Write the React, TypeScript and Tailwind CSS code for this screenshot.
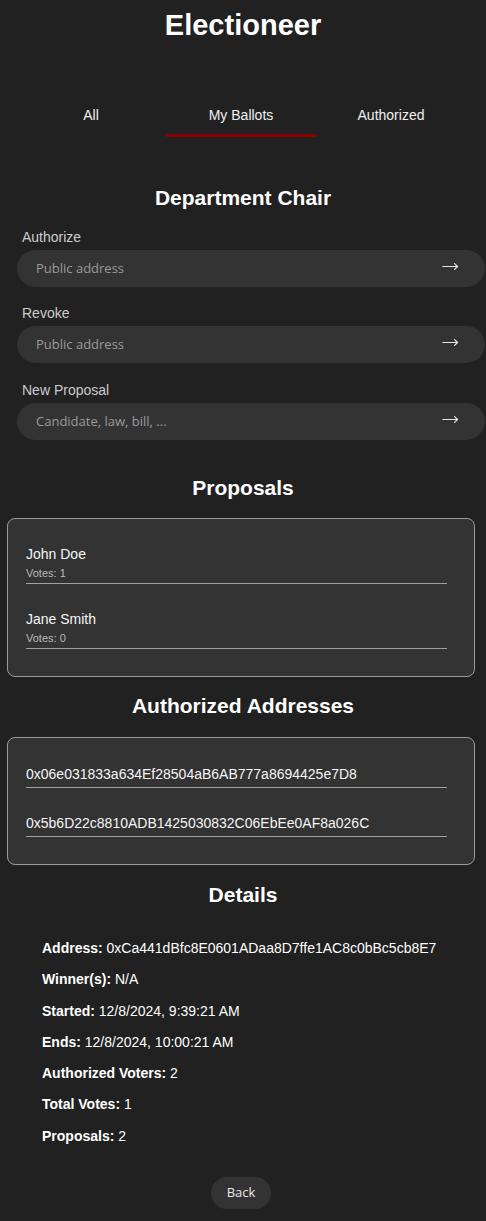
import React from "react";

const ui = "font-['Open_Sans','Noto_Sans',sans-serif]";

function Arrow() {
  return (
    <svg width="17" height="9" viewBox="0 0 17 9" fill="none" stroke="#e6e6e6" strokeWidth="1.2" strokeLinecap="round" strokeLinejoin="round">
      <path d="M0.8 4.5H15.5" />
      <path d="M12.6 1.6L15.5 4.5L12.6 7.4" />
    </svg>
  );
}

function Field({ label, placeholder, mt }: { label: string; placeholder: string; mt: string }) {
  return (
    <div className={mt}>
      <label className="block ml-[22px] text-[14px] leading-[20px] text-[#cccccc]">{label}</label>
      <div className="mt-[3px] ml-[17px] w-[468px] h-[37px] rounded-full bg-[#333333] flex items-center">
        <input
          className={`flex-1 min-w-0 bg-transparent outline-none pl-[19px] text-[13px] text-[#dddddd] placeholder:text-[#9a9a9a] ${ui}`}
          placeholder={placeholder}
        />
        <button className="mr-[26px] -mt-[4px] flex items-center">
          <Arrow />
        </button>
      </div>
    </div>
  );
}

function H2({ children, mt }: { children: React.ReactNode; mt: string }) {
  return <h2 className={`${mt} text-center text-[21px] leading-[24px] font-bold text-white`}>{children}</h2>;
}

export default function App() {
  const proposals = [
    { name: "John Doe", votes: 1 },
    { name: "Jane Smith", votes: 0 },
  ];
  const addresses = [
    "0x06e031833a634Ef28504aB6AB777a8694425e7D8",
    "0x5b6D22c8810ADB1425030832C06EbEe0AF8a026C",
  ];
  const details: [string, string][] = [
    ["Address:", "0xCa441dBfc8E0601ADaa8D7ffe1AC8c0bBc5cb8E7"],
    ["Winner(s):", "N/A"],
    ["Started:", "12/8/2024, 9:39:21 AM"],
    ["Ends:", "12/8/2024, 10:00:21 AM"],
    ["Authorized Voters:", "2"],
    ["Total Votes:", "1"],
    ["Proposals:", "2"],
  ];
  return (
    <div className="w-[486px] min-h-[1221px] bg-[#212121] text-white font-['Liberation_Sans',Arial,sans-serif] overflow-hidden pb-[12px]">
      <h1 className="pt-[6px] text-center text-[29px] leading-[38px] font-bold text-white">Electioneer</h1>

      <div className="mt-[61px] ml-[16px] w-[450px] grid grid-cols-3">
        {["All", "My Ballots", "Authorized"].map((t) => (
          <button
            key={t}
            className={`text-center text-[14px] leading-[20px] pb-[9px] border-b-[3px] text-[#f0f0f0] ${
              t === "My Ballots" ? "border-[#8b0000]" : "border-transparent"
            }`}
          >
            {t}
          </button>
        ))}
      </div>

      <H2 mt="mt-[49px]">Department Chair</H2>
      <Field label="Authorize" placeholder="Public address" mt="mt-[17px]" />
      <Field label="Revoke" placeholder="Public address" mt="mt-[16px]" />
      <Field label="New Proposal" placeholder="Candidate, law, bill, ..." mt="mt-[17px]" />

      <H2 mt="mt-[36px]">Proposals</H2>
      <div className="mt-[18px] ml-[7px] w-[468px] border border-[#9a9a9a] rounded-[8px] bg-[#333333] pt-[26px] pb-[27px]">
        {proposals.map((p, i) => (
          <div key={p.name} className={`ml-[18px] w-[421px] border-b border-[#a0a0a0] pb-[3px] ${i > 0 ? "mt-[26px]" : ""}`}>
            <div className="text-[14px] leading-[18px] text-[#f5f5f5]">{p.name}</div>
            <div className="mt-[3px] text-[11px] leading-[14px] text-[#bbbbbb]">Votes: {p.votes}</div>
          </div>
        ))}
      </div>

      <H2 mt="mt-[17px]">Authorized Addresses</H2>
      <div className="mt-[19px] ml-[7px] w-[468px] border border-[#9a9a9a] rounded-[8px] bg-[#333333] pt-[27px] pb-[27px]">
        {addresses.map((a, i) => (
          <div key={a} className={`ml-[18px] w-[421px] border-b border-[#a0a0a0] pb-[4px] text-[14px] leading-[18px] text-[#f5f5f5] ${i > 0 ? "mt-[26px]" : ""}`}>
            {a}
          </div>
        ))}
      </div>

      <H2 mt="mt-[18px]">Details</H2>
      <div className="mt-[31px] pl-[42px] flex flex-col gap-[11.3px]">
        {details.map(([k, v]) => (
          <div key={k} className="text-[14px] leading-[20px] text-white">
            <span className="font-bold">{k}</span> {v}
          </div>
        ))}
      </div>

      <button className={`mt-[31px] ml-[211px] w-[60px] h-[32px] rounded-full bg-[#333333] text-[13px] text-[#e8e8e8] block ${ui}`}>
        Back
      </button>
    </div>
  );
}
